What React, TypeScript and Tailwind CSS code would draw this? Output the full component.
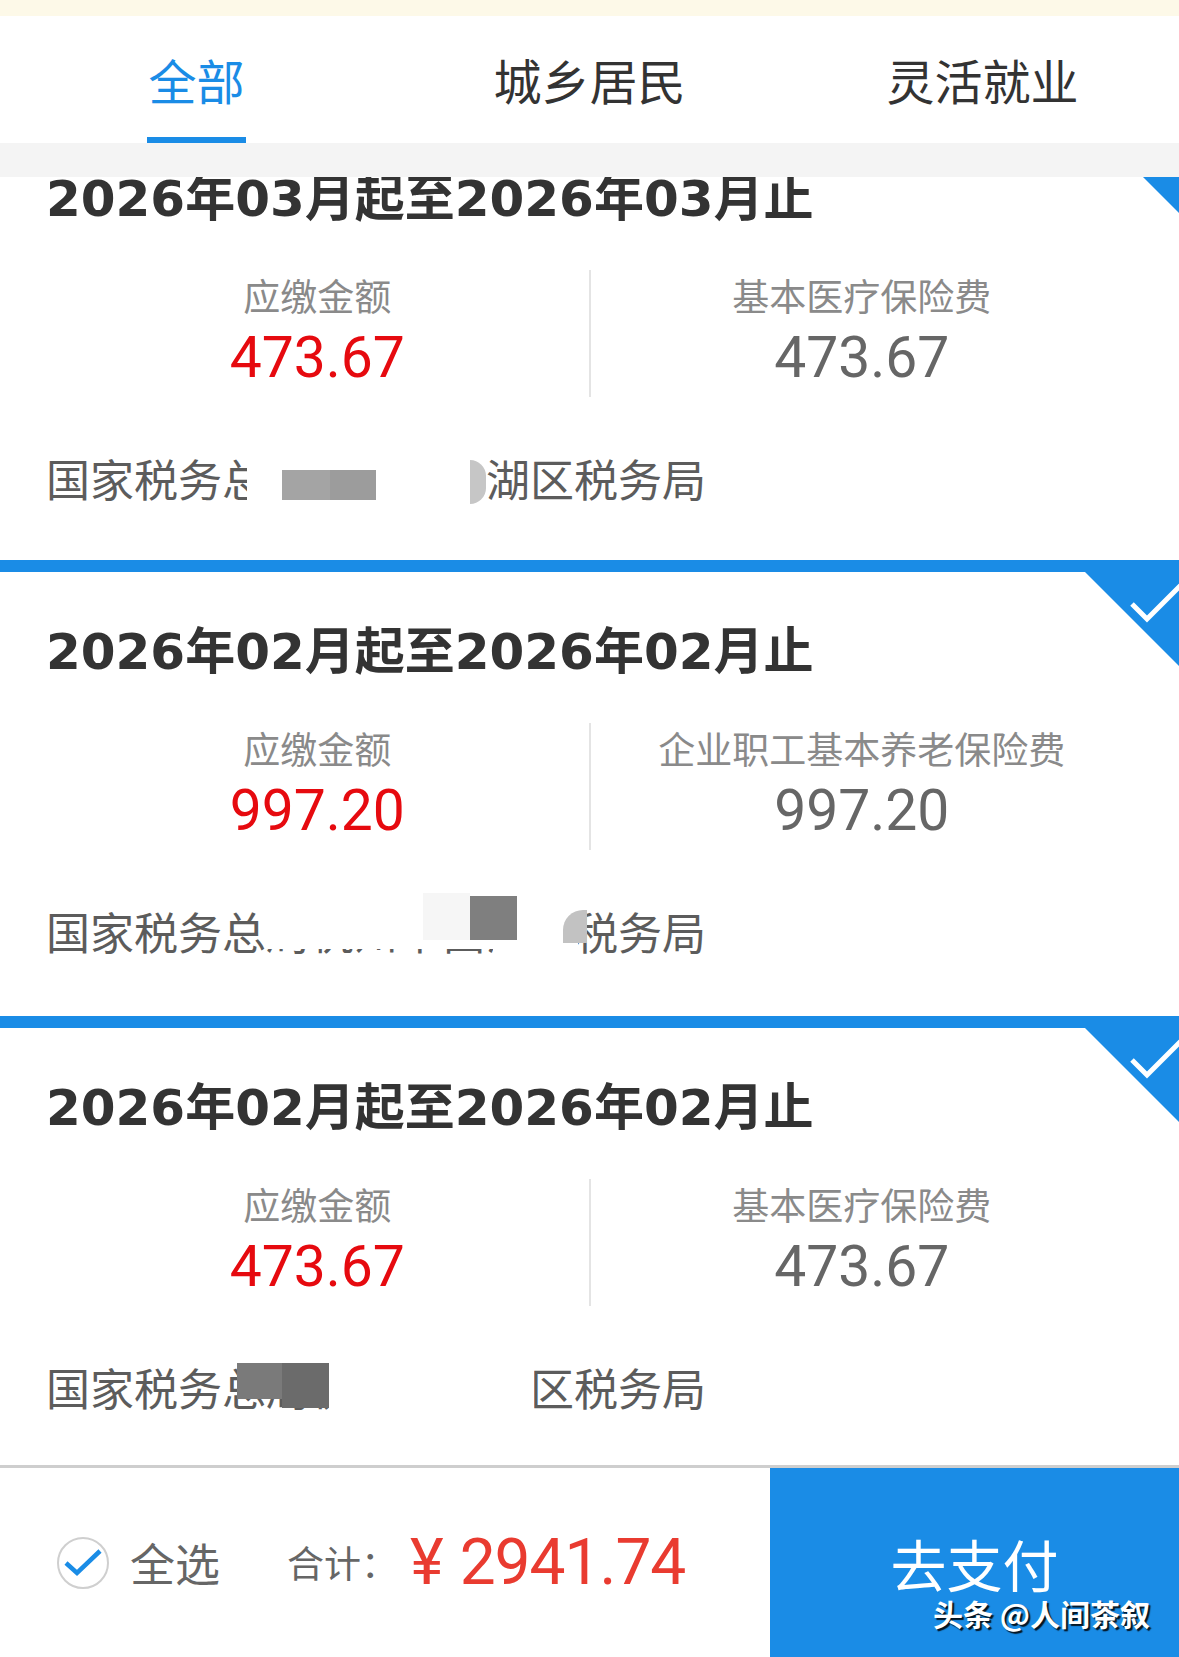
import React from "react";

const CJK = "font-['Noto_Sans_CJK_SC',sans-serif]";
const TITLE = "font-['DejaVu_Sans','Noto_Sans_CJK_SC',sans-serif]";
const NUM = "font-['Roboto','Noto_Sans_CJK_SC',sans-serif]";

function Corner() {
  return (
    <svg className="absolute right-0 top-0" width="106" height="106" viewBox="0 0 106 106">
      <polygon points="0,0 106,0 106,106" fill="#1a8ce6" />
      <polyline points="59,44 74,59 112,21" fill="none" stroke="#ffffff" strokeWidth="5" />
    </svg>
  );
}

function Card({
  title,
  amount,
  feeName,
  pbClass,
  children,
}: {
  title: string;
  amount: string;
  feeName: string;
  pbClass: string;
  children?: React.ReactNode;
}) {
  return (
    <div className={`relative bg-white ${pbClass}`}>
      <div className="h-[12px] bg-[#1a8ce6]" />
      <Corner />
      <div className="px-[46px] pt-[50px]">
        <div className={`${TITLE} whitespace-nowrap text-[50px] font-bold leading-[60px] text-[#333333]`}>{title}</div>
        <div className="mt-[41px] flex h-[127px]">
          <div className="flex flex-1 flex-col items-center">
            <div className={`${CJK} text-[37px] leading-[50px] text-[#8a8a8a]`}>应缴金额</div>
            <div className={`${NUM} text-[57px] leading-[75px] text-[#e60a0f]`}>{amount}</div>
          </div>
          <div className="w-[2px] bg-[#e4e4e4]" />
          <div className="flex flex-1 flex-col items-center">
            <div className={`${CJK} whitespace-nowrap text-[37px] leading-[50px] text-[#8a8a8a]`}>{feeName}</div>
            <div className={`${NUM} text-[57px] leading-[75px] text-[#666666]`}>{amount}</div>
          </div>
        </div>
        <div className={`${CJK} relative mt-[53px] h-[56px] whitespace-nowrap text-[44px] leading-[56px] text-[#5c5c5c]`}>
          国家税务总局杭州市西湖区税务局
          {children}
        </div>
      </div>
    </div>
  );
}

export default function App() {
  return (
    <div className="flex h-[1657px] w-[1179px] flex-col overflow-hidden bg-white">
      <div className="h-[16px] bg-[#fdf9e8]" />
      <div className="grid h-[127px] grid-cols-3 bg-white">
        <div className="flex items-end justify-center">
          <span className={`${CJK} border-b-[6px] border-[#1a8ce6] px-[1px] pb-[30px] text-[48px] leading-[56px] text-[#1a8ce6]`}>全部</span>
        </div>
        <div className="flex items-end justify-center">
          <span className={`${CJK} border-b-[6px] border-transparent pb-[30px] text-[48px] leading-[56px] text-[#333333]`}>城乡居民</span>
        </div>
        <div className="flex items-end justify-center">
          <span className={`${CJK} border-b-[6px] border-transparent pb-[30px] text-[48px] leading-[56px] text-[#333333]`}>灵活就业</span>
        </div>
      </div>
      <div className="h-[34px] bg-[#f4f4f4]" />

      <div className="relative h-[1288px] overflow-hidden bg-white">
        <div className="mt-[-70px]">
          <Card title="2026年03月起至2026年03月止" amount="473.67" feeName="基本医疗保险费" pbClass="pb-[54px]">
            <div className="absolute left-[201px] top-0 h-[56px] w-[240px] bg-white" />
            <div className="absolute left-[236px] top-[20px] h-[30px] w-[48px] bg-[#a4a4a4]" />
            <div className="absolute left-[284px] top-[20px] h-[30px] w-[46px] bg-[#9c9c9c]" />
            <div className="absolute left-[424px] top-[10px] h-[44px] w-[16px] rounded-r-full bg-[#c6c6c6]" />
          </Card>
          <Card title="2026年02月起至2026年02月止" amount="997.20" feeName="企业职工基本养老保险费" pbClass="pb-[57px]">
            <div className="absolute left-[222px] top-0 h-[46px] w-[310px] bg-white" />
            <div className="absolute left-[447px] top-0 h-[56px] w-[85px] bg-white" />
            <div className="absolute left-[377px] top-[-10px] h-[47px] w-[47px] bg-[#f6f6f6]" />
            <div className="absolute left-[424px] top-[-7px] h-[44px] w-[47px] bg-[#7f7f7f]" />
            <div className="absolute left-[517px] top-[7px] h-[33px] w-[24px] rounded-tl-[20px] bg-[#c2c2c2]" />
          </Card>
          <Card title="2026年02月起至2026年02月止" amount="473.67" feeName="基本医疗保险费" pbClass="pb-[57px]">
            <div className="absolute left-[191px] top-[4px] h-[36px] w-[46px] bg-[#7a7a7a]" />
            <div className="absolute left-[236px] top-[4px] h-[45px] w-[47px] bg-[#6b6b6b]" />
            <div className="absolute left-[283px] top-0 h-[56px] w-[205px] bg-white" />
          </Card>
        </div>
      </div>

      <div className="relative flex h-[192px] border-t-[3px] border-[#cecece] bg-white">
        <div className="flex flex-1 items-center pl-[57px]">
          <div className="relative h-[52px] w-[52px] shrink-0 rounded-full border-2 border-[#cfcfcf]">
            <svg className="absolute left-[-2px] top-[-2px]" width="52" height="52" viewBox="0 0 52 52">
              <polyline points="9,26 20,36 43,14" fill="none" stroke="#1a8ce6" strokeWidth="4.5" strokeLinejoin="miter" />
            </svg>
          </div>
          <span className={`${CJK} ml-[21px] text-[45px] leading-none text-[#666666]`}>全选</span>
          <span className={`${CJK} ml-[67px] text-[37px] leading-none text-[#666666]`}>合计：</span>
          <span className={`${NUM} ml-[12px] text-[64px] leading-none text-[#e93b30]`}>¥</span>
          <span className={`${NUM} ml-[16px] text-[64px] leading-none tracking-[-1px] text-[#e93b30]`}>2941.74</span>
        </div>
        <div className={`${CJK} flex w-[409px] items-center justify-center bg-[#1a8ce6] text-[56px] text-white`}>去支付</div>
        <div
          className={`${CJK} absolute left-[933px] top-[128px] whitespace-nowrap text-[30px] font-bold leading-[34px] text-white [text-shadow:2px_2px_1px_rgba(0,0,0,0.85)]`}
        >
          头条 @人间茶叙
        </div>
      </div>
    </div>
  );
}
